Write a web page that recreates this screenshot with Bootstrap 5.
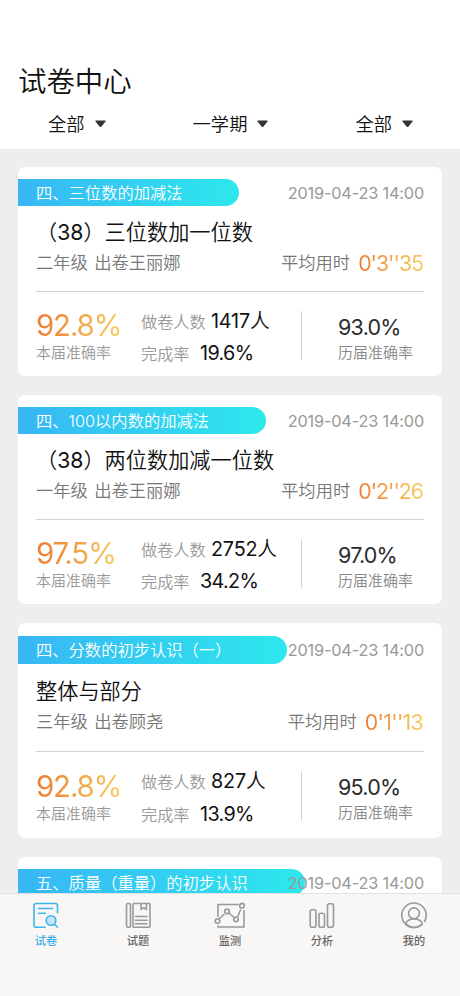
<!DOCTYPE html>
<html lang="zh-CN">
<head>
<meta charset="utf-8">
<meta name="viewport" content="width=device-width, initial-scale=1">
<title>试卷中心</title>
<link href="https://cdn.jsdelivr.net/npm/bootstrap@5.3.0/dist/css/bootstrap.min.css" rel="stylesheet">
<style>
  body { font-family: Inter, "Noto Sans CJK SC", sans-serif; font-weight: 350; background: #eee; color: #111; height: 996px; }
  .page-head { height: 149px; padding: 62px 18px 0; }
  .page-title { font-size: 28.4px; line-height: 40px; font-weight: 350; }
  .filters { padding: 0 29px 0 30px; margin-top: 8px; font-size: 18.3px; line-height: 28px; }
  .filters svg { width: 11px; height: 8px; margin-left: 10px; }
  .papers { padding: 18px 18px 0; gap: 19px; }
  .paper { height: 209px; border-radius: 7px; padding-top: 12px; }
  .tag-row { height: 27px; padding-right: 18px; margin-bottom: 11px; }
  .tag { height: 27px; line-height: 28px; border-radius: 0 14px 14px 0; padding-left: 18px; font-size: 16.3px; color: #fff; background: linear-gradient(90deg, #38b6f5, #2de8ec); }
  .tag.w1 { width: 221px; } .tag.w2 { width: 248px; } .tag.w3 { width: 269px; } .tag.w4 { width: 287px; }
  .date { font-size: 16.3px; line-height: 28px; color: #999; font-weight: 400; margin-left: -60px; white-space: nowrap; letter-spacing: -.17px; }
  .name { font-size: 21.2px; line-height: 30px; padding-left: 18px; }
  .name span { font-weight: 400; }
  .meta { margin-top: 1px; padding: 0 18px; font-size: 17.3px; line-height: 30px; color: #777; word-spacing: 1.5px; }
  .warm { background: linear-gradient(90deg, #ee7a30, #f5cf62); -webkit-background-clip: text; background-clip: text; color: transparent; }
  .clock { font-size: 21.3px; font-weight: 400; margin-left: 8px; letter-spacing: -1px; padding-right: 1px; }
  .tall .clock { letter-spacing: -.7px; }
  .stats { margin: 13px 18px 0; border-top: 1px solid #d4d4d4; height: 84px; }
  .rate { width: 105px; padding-top: 16px; }
  .rate-num { font-size: 29.5px; font-weight: 400; line-height: 34px; width: 86px; white-space: nowrap; letter-spacing: -1.2px; }
  .cap { font-size: 15px; line-height: 22px; color: #999; white-space: nowrap; }
  .counts { width: 160px; padding-top: 14px; font-size: 16.2px; color: #999; line-height: 32px; white-space: nowrap; }
  .counts b { font-weight: 400; font-size: 19.8px; color: #111; letter-spacing: -.65px; line-height: 31px; }
  .counts b.people { letter-spacing: -.2px; }
  .counts b span { font-weight: 350; }
  .k1 { width: 70px; } .k2 { width: 59px; }
  .past { margin-top: 19px; height: 49px; border-left: 1px solid #d4d4d4; padding-left: 36px; }
  .past-num { font-size: 21.5px; line-height: 32px; font-weight: 400; color: #2b2b2b; letter-spacing: -.75px; }
  .past .cap { color: #888; line-height: 20px; }
  .tall { height: 215px; padding-top: 13px; }
  .tall .tag-row, .tall .tag { height: 28px; }
  .tall .tag-row { margin-bottom: 12px; }
  .tall .stats { margin-top: 14px; }
  .tall .rate { padding-top: 17px; }
  .tall .counts { line-height: 33px; }
  .tall .past { height: 50px; }
  .tabs { height: 103px; background: #f8f7f6; border-top: 1px solid #e2e2e2; font-size: 11.2px; font-weight: 500; color: #666; padding-top: 7px; }
  .tabs svg { width: 32px; height: 28px; fill: none; stroke: #999; stroke-width: 1.6; stroke-linecap: round; stroke-linejoin: round; }
  .tabs span { line-height: 16px; margin-top: 4px; }
  .tabs .on { color: #3cb0ea; } .tabs .on svg { stroke: #3cb4ee; }
</style>
</head>
<body class="overflow-hidden">
<div class="d-flex flex-column vh-100">
  <header class="page-head bg-white flex-shrink-0">
    <h1 class="page-title m-0">试卷中心</h1>
    <div class="filters d-flex justify-content-between">
      <div class="d-flex align-items-center">全部<svg viewBox="0 0 11 8"><path d="M1 .5h9q1 0 .5 1L6.500 6.500q-1 1-2 0L.5 1.500q-.5-1 .5-1z" fill="#333"/></svg></div>
      <div class="d-flex align-items-center">一学期<svg viewBox="0 0 11 8"><path d="M1 .5h9q1 0 .5 1L6.500 6.500q-1 1-2 0L.5 1.500q-.5-1 .5-1z" fill="#333"/></svg></div>
      <div class="d-flex align-items-center">全部<svg viewBox="0 0 11 8"><path d="M1 .5h9q1 0 .5 1L6.500 6.500q-1 1-2 0L.5 1.500q-.5-1 .5-1z" fill="#333"/></svg></div>
    </div>
  </header>

  <main class="papers d-flex flex-column flex-grow-1 overflow-hidden">
    <section class="paper bg-white flex-shrink-0">
      <div class="tag-row d-flex justify-content-between"><div class="tag w1">四、三位数的加减法</div><div class="date">2019-04-23 14:00</div></div>
      <div class="name">（<span>38</span>）三位数加一位数</div>
      <div class="meta d-flex justify-content-between"><span>二年级 出卷王丽娜</span><span class="d-flex">平均用时<span class="clock warm">0'3''35</span></span></div>
      <div class="stats d-flex">
        <div class="rate"><div class="rate-num warm">92.8%</div><div class="cap">本届准确率</div></div>
        <div class="counts"><div class="d-flex"><span class="k1">做卷人数</span><b class="people">1417<span>人</span></b></div><div class="d-flex"><span class="k2">完成率</span><b>19.6%</b></div></div>
        <div class="past"><div class="past-num">93.0%</div><div class="cap">历届准确率</div></div>
      </div>
    </section>

    <section class="paper bg-white flex-shrink-0">
      <div class="tag-row d-flex justify-content-between"><div class="tag w2">四、100以内数的加减法</div><div class="date">2019-04-23 14:00</div></div>
      <div class="name">（<span>38</span>）两位数加减一位数</div>
      <div class="meta d-flex justify-content-between"><span>一年级 出卷王丽娜</span><span class="d-flex">平均用时<span class="clock warm">0'2''26</span></span></div>
      <div class="stats d-flex">
        <div class="rate"><div class="rate-num warm">97.5%</div><div class="cap">本届准确率</div></div>
        <div class="counts"><div class="d-flex"><span class="k1">做卷人数</span><b class="people">2752<span>人</span></b></div><div class="d-flex"><span class="k2">完成率</span><b>34.2%</b></div></div>
        <div class="past"><div class="past-num">97.0%</div><div class="cap">历届准确率</div></div>
      </div>
    </section>

    <section class="paper tall bg-white flex-shrink-0">
      <div class="tag-row d-flex justify-content-between"><div class="tag w3">四、分数的初步认识（一）</div><div class="date">2019-04-23 14:00</div></div>
      <div class="name">整体与部分</div>
      <div class="meta d-flex justify-content-between"><span>三年级 出卷顾尧</span><span class="d-flex">平均用时<span class="clock warm">0'1''13</span></span></div>
      <div class="stats d-flex">
        <div class="rate"><div class="rate-num warm">92.8%</div><div class="cap">本届准确率</div></div>
        <div class="counts"><div class="d-flex"><span class="k1">做卷人数</span><b class="people">827<span>人</span></b></div><div class="d-flex"><span class="k2">完成率</span><b>13.9%</b></div></div>
        <div class="past"><div class="past-num">95.0%</div><div class="cap">历届准确率</div></div>
      </div>
    </section>

    <section class="paper bg-white flex-shrink-0">
      <div class="tag-row d-flex justify-content-between"><div class="tag w4">五、质量（重量）的初步认识</div><div class="date">2019-04-23 14:00</div></div>
    </section>
  </main>

  <nav class="tabs row g-0 flex-shrink-0 text-center">
    <div class="col on d-flex flex-column align-items-center">
      <svg viewBox="0 0 32 28"><path d="M27.500 12V4.500q0-2-2-2H6q-2 0-2 2v20q0 1.700 2 1.700h9M8.500 7.500h14M8.500 12.300h7M24.500 23.200l3 3"/><circle cx="21" cy="19.500" r="4.800" fill="#bfe6f8"/></svg><span>试卷</span></div>
    <div class="col d-flex flex-column align-items-center">
      <svg viewBox="0 0 32 28"><rect x="4.500" y="2.500" width="4" height="23.700" rx="1.500"/><rect x="11" y="2.500" width="17" height="23.700" rx="1"/><path d="M19 3v5.500l2.700-1.800 2.700 1.800V3M13.500 15.500h11.500M13.500 19.300h11.500M13.500 22.800h11.500"/></svg><span>试题</span></div>
    <div class="col d-flex flex-column align-items-center">
      <svg viewBox="0 0 32 28"><path d="M4 15.500V3.500h20M30 9.500v16.500H4v-1M5.500 17.500l4.500-4M15.500 12.500l4 3.500M24 15l2.500-6"/><circle cx="3.500" cy="20" r="2.300"/><circle cx="13" cy="10.300" r="2.300"/><circle cx="22" cy="18.300" r="2.300"/><circle cx="28" cy="4.700" r="2.300"/></svg><span>监测</span></div>
    <div class="col d-flex flex-column align-items-center">
      <svg viewBox="0 0 32 28"><rect x="4.200" y="8.700" width="5.800" height="17.500" rx="2"/><rect x="13" y="12.300" width="5.500" height="13.900" rx="2"/><rect x="21.500" y="2.700" width="6" height="23.500" rx="2"/></svg><span>分析</span></div>
    <div class="col d-flex flex-column align-items-center">
      <svg viewBox="0 0 32 28"><path d="M26.500 20.500A12.200 12.200 0 1 0 22.500 24.600M7.800 23.200c1.500-7 15-7 16.500 0"/><path d="M8 23.500q8 6 16 0"/><circle cx="16" cy="12.300" r="5.400"/></svg><span>我的</span></div>
  </nav>
</div>
<script src="https://cdn.jsdelivr.net/npm/bootstrap@5.3.0/dist/js/bootstrap.bundle.min.js"></script>
</body>
</html>
